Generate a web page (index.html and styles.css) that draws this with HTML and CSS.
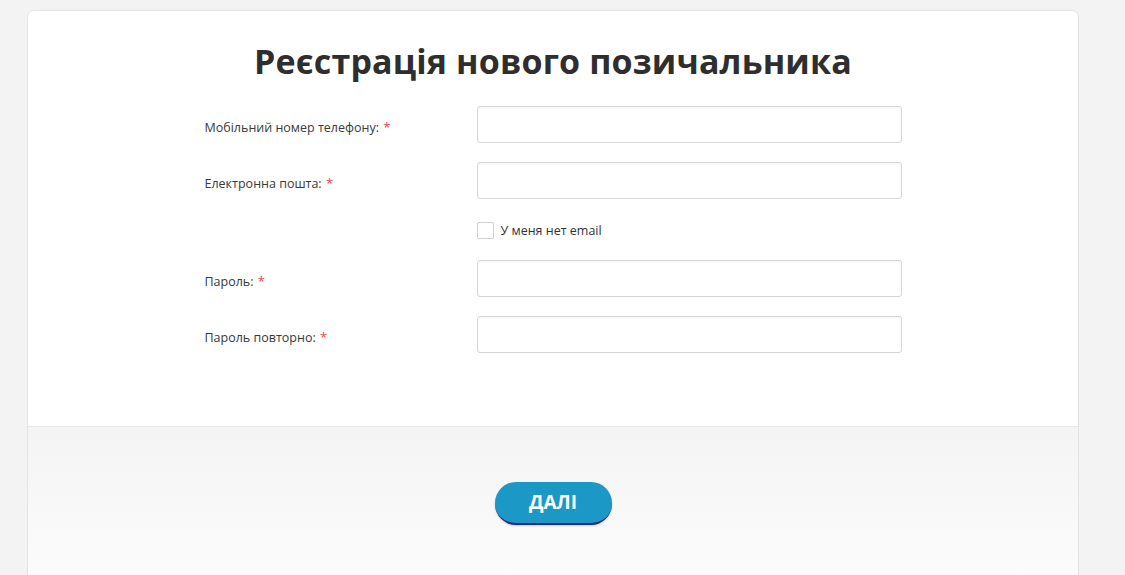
FILE: index.html
```html
<!DOCTYPE html>
<html lang="uk">

<head>
  <meta charset="UTF-8">
  <meta name="viewport" content="width=device-width, initial-scale=1.0">
  <title>Реєстрація нового позичальника</title>
  <link rel="stylesheet" href="styles.css">
</head>

<body>
  <div class="reg-card">
    <div class="reg-body">
      <h1 class="reg-title">Реєстрація нового позичальника</h1>
      <form class="reg-form" action="javascript:;">
        <div class="reg-row">
          <label class="reg-label" for="phone">Мобільний номер телефону: <span class="req">*</span></label>
          <input class="reg-input" type="text" id="phone">
        </div>
        <div class="reg-row">
          <label class="reg-label" for="email">Електронна пошта: <span class="req">*</span></label>
          <input class="reg-input" type="text" id="email">
        </div>
        <div class="reg-check">
          <label><input type="checkbox" class="check-box"> У меня нет email</label>
        </div>
        <div class="reg-row">
          <label class="reg-label" for="pass">Пароль: <span class="req">*</span></label>
          <input class="reg-input" type="password" id="pass">
        </div>
        <div class="reg-row">
          <label class="reg-label" for="pass2">Пароль повторно: <span class="req">*</span></label>
          <input class="reg-input" type="password" id="pass2">
        </div>
      </form>
    </div>
    <!-- нижня частина з кнопкою -->
    <div class="reg-footer">
      <a class="reg-button" href="javascript:;">ДАЛІ</a>
    </div>
  </div>
</body>

</html>
```

FILE: styles.css
```css
html,
body,
div,
h1,
form,
label {
  padding: 0px;
  margin: 0px;
}

body {
  background: #f3f3f3;
  font-family: "Open Sans", "Liberation Sans", sans-serif;
  color: #333;
}

a {
  text-decoration: none;
}

.reg-card {
  width: 1050px;
  margin: 10px 0 0 27px;
  background: #fff;
  border: 1px solid #e4e4e4;
  border-radius: 7px 7px 0 0;
  overflow: hidden;
}

.reg-body {
  padding: 32px 0 54px;
}

.reg-title {
  text-align: center;
  font-size: 34px;
  line-height: 36px;
  font-weight: 700;
  color: #2e2e2e;
  letter-spacing: 0.15px;
}

.reg-form {
  width: 697px;
  margin: 27px auto 0;
}

.reg-row {
  display: flex;
  align-items: center;
  margin-bottom: 19px;
}

.reg-label {
  width: 272px;
  font-size: 12.5px;
  color: #3a3a3a;
  padding-top: 5px;
}

.req {
  color: #e2474b;
  font-size: 13px;
  margin-left: 1px;
}

.reg-input {
  width: 425px;
  height: 37px;
  box-sizing: border-box;
  border: 1px solid #d6d6d6;
  border-radius: 3px;
  box-shadow: inset 0 1px 2px rgba(0, 0, 0, .05);
  background: #fff;
}

.reg-check {
  padding: 4px 0 0 272px;
  margin-bottom: 21px;
  font-size: 12.5px;
  color: #333;
}

.reg-check label {
  display: flex;
  align-items: center;
  gap: 7px;
}

.check-box {
  appearance: none;
  margin: 0;
  width: 17px;
  height: 17px;
  border: 1px solid #d0d0d0;
  border-radius: 2px;
  background: #fff;
}

.reg-footer {
  height: 160px;
  border-top: 1px solid #e8e8e8;
  background: linear-gradient(#f4f4f4, #fcfcfc);
  display: flex;
  justify-content: center;
  padding-top: 55px;
  box-sizing: border-box;
}

.reg-button {
  display: block;
  width: 117px;
  height: 41px;
  line-height: 41px;
  text-align: center;
  background: #1b98c6;
  border-bottom: 2px solid #2c2a70;
  border-radius: 21px;
  color: #fff;
  font-size: 19px;
  font-weight: 700;
  box-shadow: 0 1px 2px rgba(0, 0, 0, .2);
}
```
